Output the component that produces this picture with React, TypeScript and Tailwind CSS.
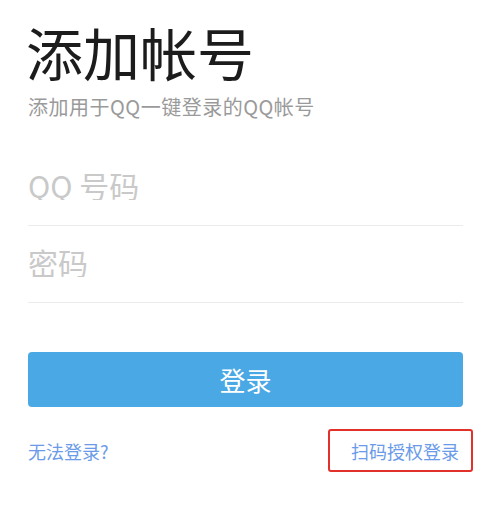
import React from 'react';

export default function App() {
  return (
    <div
      className="w-[497px] h-[519px] bg-white pl-[28px] pr-[34px] pt-[23px] flex flex-col"
      style={{ fontFamily: '"Noto Sans CJK SC", "Noto Sans", sans-serif' }}
    >
      <h1 className="text-[57px] leading-[57px] text-[#1c1c1c] font-normal -ml-[2px]">添加帐号</h1>
      <p className="mt-[17px] text-[20px] leading-[20px] text-[#9a9a9a] tracking-[0.5px]">
        添加用于QQ一键登录的QQ帐号
      </p>

      <div className="mt-[53px] pb-[22px] border-b border-[#ebebeb]">
        <input
          type="text"
          placeholder="QQ 号码"
          className="w-full text-[30px] leading-[30px] h-[30px] outline-none placeholder:text-[#c9c9c9] text-[#333]"
        />
      </div>
      <div className="mt-[21px] pb-[22px] border-b border-[#ebebeb]">
        <input
          type="password"
          placeholder="密码"
          className="w-full text-[30px] leading-[30px] h-[30px] outline-none placeholder:text-[#c9c9c9] text-[#333]"
        />
      </div>

      <button className="mt-[49px] h-[55px] w-full rounded-[4px] bg-[#4aa8e5] text-white text-[26px] leading-[26px]">
        登录
      </button>

      <div className="mt-[22px] flex items-center justify-between">
        <a className="text-[18px] leading-[18px] text-[#6b9be8]">无法登录?</a>
        <a className="-mr-[10px] h-[43px] flex items-center pl-[21px] pr-[12px] border-2 border-[#e2302a] rounded-[3px] text-[18px] leading-[18px] text-[#6b9be8]">
          扫码授权登录
        </a>
      </div>
    </div>
  );
}
